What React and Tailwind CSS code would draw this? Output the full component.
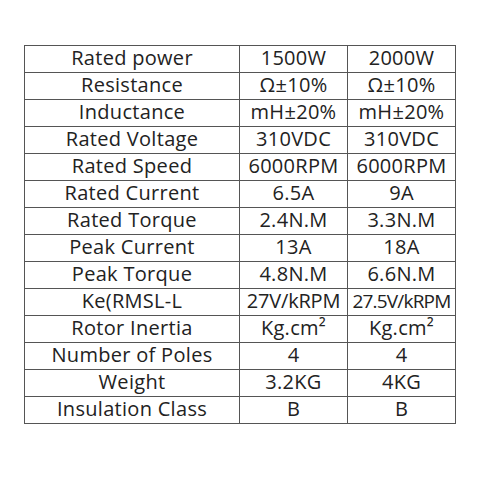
import React from "react";

const rows = [
  ["Rated power", "1500W", "2000W"],
  ["Resistance", "Ω±10%", "Ω±10%"],
  ["Inductance", "mH±20%", "mH±20%"],
  ["Rated Voltage", "310VDC", "310VDC"],
  ["Rated Speed", "6000RPM", "6000RPM"],
  ["Rated Current", "6.5A", "9A"],
  ["Rated Torque", "2.4N.M", "3.3N.M"],
  ["Peak Current", "13A", "18A"],
  ["Peak Torque", "4.8N.M", "6.6N.M"],
  ["Ke(RMSL-L", "27V/kRPM", "27.5V/kRPM"],
  ["Rotor Inertia", "Kg.cm²", "Kg.cm²"],
  ["Number of Poles", "4", "4"],
  ["Weight", "3.2KG", "4KG"],
  ["Insulation Class", "B", "B"],
];

export default function App() {
  return (
    <div className="w-[480px] h-[480px] bg-white pl-[24px] pt-[45px]" style={{ fontFamily: '"Open Sans", sans-serif' }}>
      <div className="grid grid-cols-[214px_107px_107px] auto-rows-[26px] gap-px p-px bg-[#555555] w-[432px]">
        {rows.map((r, i) => (
          <React.Fragment key={i}>
            {r.map((c, j) => (
              <div
                key={j}
                className={
                  "bg-white flex items-center justify-center leading-none text-[#222] whitespace-nowrap pb-[2px] " +
                  (c === "27.5V/kRPM"
                    ? "text-[19px] tracking-[-0.8px]"
                    : c === "27V/kRPM"
                    ? "text-[20px] tracking-[-0.2px]"
                    : "text-[20px] tracking-[0.3px]")
                }
              >
                {c}
              </div>
            ))}
          </React.Fragment>
        ))}
      </div>
    </div>
  );
}
